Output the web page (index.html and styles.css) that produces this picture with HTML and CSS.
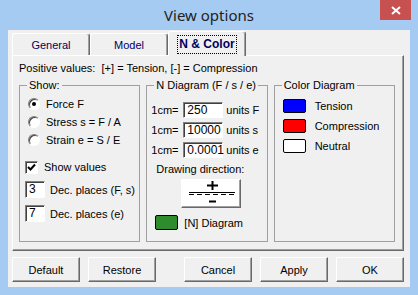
FILE: index.html
```html
<!DOCTYPE html>
<html lang="en">
<head>
    <meta charset="UTF-8">
    <title>View options</title>
    <link rel="stylesheet" href="styles.css">
</head>
<body>
    <div class="window">
        <div class="titlebar">
            <span></span>
            <span class="title">View options</span>
            <span class="close">
                <svg width="10" height="9" viewBox="0 0 10 9">
                    <path d="M1 1 L9 8 M9 1 L1 8" stroke="#fff" stroke-width="2"/>
                </svg>
            </span>
        </div>
        <div class="client">
            <div class="tabs">
                <div class="tab">General</div>
                <div class="tab">Model</div>
                <div class="tab active"><span class="focus">N &amp; Color</span></div>
            </div>
            <div class="panel">
                <p class="legend-text">Positive values:&nbsp; [+] = Tension, [-] = Compression</p>
                <div class="groups">
                    <fieldset class="group show">
                        <legend>Show:</legend>
                        <div class="radio-row"><span class="radio checked"></span>Force F</div>
                        <div class="radio-row"><span class="radio"></span>Stress s = F / A</div>
                        <div class="radio-row"><span class="radio"></span>Strain e = S / E</div>
                        <div class="check-row">
                            <span class="checkbox">
                                <svg width="9" height="9" viewBox="0 0 9 9">
                                    <path d="M1 4 L3.5 6.5 L8 1.5" stroke="#000" stroke-width="2" fill="none"/>
                                </svg>
                            </span>Show values
                        </div>
                        <div class="dec-row"><span class="field small">3</span>Dec. places (F, s)</div>
                        <div class="dec-row"><span class="field small">7</span>Dec. places (e)</div>
                    </fieldset>
                    <fieldset class="group ndiag">
                        <legend>N Diagram (F / s / e)</legend>
                        <div class="unit-row"><span class="cm">1cm=</span><span class="field">250</span>units F</div>
                        <div class="unit-row"><span class="cm">1cm=</span><span class="field">10000</span>units s</div>
                        <div class="unit-row"><span class="cm">1cm=</span><span class="field">0.0001</span>units e</div>
                        <div class="direction-label">Drawing direction:</div>
                        <div class="direction-btn">
                            <svg width="58" height="27" viewBox="0 0 58 27">
                                <path d="M25 5.5 H36 M30.5 1 V10" stroke="#000" stroke-width="2"/>
                                <path d="M7 12.5 H53" stroke="#000" stroke-width="1"/>
                                <path d="M7 14.5 H53" stroke="#000" stroke-width="1" stroke-dasharray="5 3"/>
                                <path d="M27 21.5 H34" stroke="#000" stroke-width="2"/>
                            </svg>
                        </div>
                        <div class="swatch-row"><span class="swatch green"></span>[N] Diagram</div>
                    </fieldset>
                    <fieldset class="group colors">
                        <legend>Color Diagram</legend>
                        <div class="color-row"><span class="swatch blue"></span>Tension</div>
                        <div class="color-row"><span class="swatch red"></span>Compression</div>
                        <div class="color-row"><span class="swatch white"></span>Neutral</div>
                    </fieldset>
                </div>
            </div>
            <div class="buttons">
                <button>Default</button>
                <button>Restore</button>
                <button class="push">Cancel</button>
                <button>Apply</button>
                <button>OK</button>
            </div>
        </div>
    </div>
</body>
</html>
```

FILE: styles.css
```css
body {
    margin: 0;
    background: #a6cbf3;
    font-family: "Liberation Sans", Arial, sans-serif;
    font-size: 11px;
    color: #000;
}
.window {
    width: 418px;
    height: 295px;
    background: #a6cbf3;
}
.titlebar {
    height: 30px;
    display: grid;
    grid-template-columns: 1fr auto 1fr;
}
.title {
    font-family: "Noto Sans", sans-serif;
    font-size: 15px;
    color: #222;
    line-height: 30px;
}
.close {
    justify-self: end;
    margin-right: 7px;
    width: 31px;
    height: 20px;
    background: #c75050;
    display: flex;
    align-items: center;
    justify-content: center;
}
.client {
    margin-left: 8px;
    width: 402px;
    height: 257px;
    box-sizing: border-box;
    padding: 1px 6px 0 4px;
    background: #f0f0f0;
}

/* tabs */
.tabs {
    display: flex;
    align-items: flex-end;
    height: 24px;
}
.tab {
    width: 78px;
    height: 22px;
    box-sizing: border-box;
    border: 1px solid #fff;
    border-right-color: #696969;
    border-bottom: none;
    border-radius: 3px 3px 0 0;
    box-shadow: inset -1px 0 #a0a0a0;
    text-align: center;
    line-height: 22px;
    color: #000060;
}
.tab.active {
    height: 25px;
    margin-bottom: -1px;
    position: relative;
    background: #f0f0f0;
    font-weight: bold;
    font-size: 12px;
    line-height: 24px;
}
.focus {
    outline: 1px dotted #000;
    padding: 1px 1px 2px;
}

/* panel */
.panel {
    width: 392px;
    height: 196px;
    box-sizing: border-box;
    border: 1px solid;
    border-color: #fff #696969 #696969 #fff;
    box-shadow: inset -1px -1px #a0a0a0;
    padding: 6px 8px 0 6px;
}
.legend-text {
    margin: 0;
    line-height: 13px;
}
.groups {
    display: flex;
    gap: 6px;
    margin-top: 4px;
}
.group {
    margin: 0;
    width: 122px;
    height: 163px;
    box-sizing: border-box;
    border: 1px solid #a0a0a0;
    padding: 0;
}
.group legend {
    margin-left: 7px;
    padding: 0 2px;
    line-height: 13px;
}

/* show */
.radio-row {
    display: flex;
    align-items: center;
    height: 18px;
    padding-left: 8px;
}
.show .radio-row:first-of-type {
    margin-top: 3px;
}
.radio {
    width: 12px;
    height: 12px;
    box-sizing: border-box;
    border-radius: 50%;
    border: 1px solid;
    border-color: #808080 #fff #fff #808080;
    box-shadow: inset 1px 1px #404040;
    background: #fff;
    margin-right: 6px;
    display: flex;
    align-items: center;
    justify-content: center;
}
.radio.checked::after {
    content: "";
    width: 4px;
    height: 4px;
    border-radius: 50%;
    background: #000;
}
.check-row {
    display: flex;
    align-items: center;
    height: 18px;
    margin-top: 9px;
    padding-left: 5px;
}
.checkbox {
    width: 13px;
    height: 13px;
    box-sizing: border-box;
    border: 1px solid;
    border-color: #808080 #fff #fff #808080;
    box-shadow: inset 1px 1px #404040;
    background: #fff;
    margin-right: 6px;
    display: flex;
    align-items: center;
    justify-content: center;
}
.dec-row {
    display: flex;
    align-items: center;
    height: 17px;
    margin-top: 5px;
    padding-left: 5px;
}
.dec-row + .dec-row {
    margin-top: 7px;
}
.field {
    width: 40px;
    height: 16px;
    box-sizing: border-box;
    border: 1px solid;
    border-color: #808080 #fff #fff #808080;
    box-shadow: inset 1px 1px #404040;
    background: #fff;
    font-size: 12px;
    line-height: 14px;
    padding-left: 3px;
    margin-right: 3px;
}
.field.small {
    width: 20px;
    height: 17px;
    margin-right: 5px;
}

/* n diagram */
.unit-row {
    display: flex;
    align-items: center;
    height: 16px;
    margin-top: 4px;
    padding-left: 4px;
}
.ndiag .unit-row:first-of-type {
    margin-top: 10px;
}
.cm {
    width: 32px;
}
.direction-label {
    margin-top: 5px;
    padding-left: 9px;
    line-height: 13px;
}
.direction-btn {
    margin: 3px 0 0 34px;
    width: 60px;
    height: 29px;
    box-sizing: border-box;
    border: 1px solid;
    border-color: #fff #696969 #696969 #fff;
    box-shadow: inset -1px -1px #a0a0a0;
    background: #fff;
}
.swatch-row {
    display: flex;
    align-items: center;
    margin-top: 7px;
    padding-left: 8px;
}
.swatch {
    width: 23px;
    height: 15px;
    box-sizing: border-box;
    border: 1px solid #000;
    border-radius: 2px;
    margin-right: 6px;
}
.green { background: #2e8b2e; }
.blue { background: #0000ff; }
.red { background: #ff0000; }
.white { background: #fff; }

/* colors */
.color-row {
    display: flex;
    align-items: center;
    height: 14px;
    margin-top: 6px;
    padding-left: 8px;
}
.colors .color-row:first-of-type {
    margin-top: 7px;
}
.color-row .swatch {
    height: 14px;
    margin-right: 9px;
}

/* bottom buttons */
.buttons {
    display: flex;
    gap: 8px;
    margin-top: 6px;
}
.buttons button {
    width: 68px;
    height: 25px;
    border: 1px solid;
    border-color: #fff #696969 #696969 #fff;
    box-shadow: inset -1px -1px #a0a0a0;
    background: #f0f0f0;
    font-family: "Liberation Sans", Arial, sans-serif;
    font-size: 11px;
    color: #000;
    padding: 0;
}
.buttons .push {
    margin-left: auto;
}
```
